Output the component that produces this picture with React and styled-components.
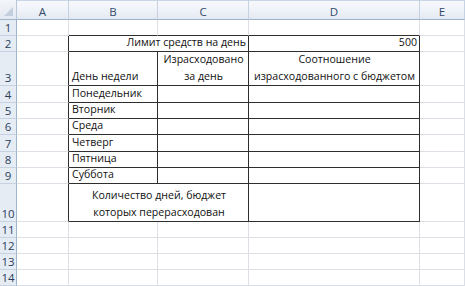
import React from "react";
import styled, { createGlobalStyle, css } from "styled-components";

const Global = createGlobalStyle`
  html, body { margin: 0; padding: 0; background: #ffffff; }
  body { font-family: "Open Sans", "Noto Sans", Arial, sans-serif; }
`;

const COLS = [17, 52, 89, 91, 171, 45];
const ROWS = [20, 16, 16, 34, 17, 16, 16, 17, 16, 16, 38, 16, 16, 16, 16];
const LETTERS = ["A", "B", "C", "D", "E"];

const GRID = "#dcdfe6";
const DARK = "#2e2e2e";

const Sheet = styled.div`
  display: grid;
  grid-template-columns: ${COLS.map((c) => c + "px").join(" ")};
  grid-template-rows: ${ROWS.map((r) => r + "px").join(" ")};
  width: 465px;
  height: 286px;
  overflow: hidden;
  background: #fff;
`;

const Corner = styled.div`
  position: relative;
  background: linear-gradient(#f3f6fa, #e2e8f1);
  border-right: 1px solid #b7c6d8;
  border-bottom: 1px solid #9fb3cb;
  box-sizing: border-box;
  &::after {
    content: "";
    position: absolute;
    right: 3px;
    bottom: 3px;
    width: 0;
    height: 0;
    border-left: 9px solid transparent;
    border-bottom: 9px solid #c3cedd;
  }
`;

const ColHead = styled.div`
  display: flex;
  align-items: center;
  justify-content: center;
  box-sizing: border-box;
  padding-top: 2px;
  background: linear-gradient(#f7f9fc 0%, #eef2f8 55%, #e3e9f2 100%);
  border-top: 1px solid #c9d5e6;
  border-right: 1px solid #c6d2e2;
  border-bottom: 1px solid #9fb3cb;
  color: #34496a;
  font-size: 11.5px;
`;

const RowHead = styled.div`
  display: flex;
  align-items: flex-end;
  justify-content: center;
  box-sizing: border-box;
  background: #e6ecf4;
  border-right: 1px solid #9fb3cb;
  border-bottom: 1px solid #c6d2e2;
  color: #2b3f5c;
  font-size: 11.5px;
  line-height: 15px;
`;

const Cell = styled.div`
  display: flex;
  flex-direction: column;
  justify-content: flex-end;
  box-sizing: border-box;
  min-width: 0;
  padding: 0 2px 0 3px;
  border-right: 1px solid ${(p) => (p.$darkRight ? DARK : GRID)};
  border-bottom: 1px solid ${(p) => (p.$darkBottom ? DARK : GRID)};
  color: #111;
  font-size: 10.6px;
  line-height: 17px;
  white-space: nowrap;
  text-align: ${(p) => p.$align || "left"};
  ${(p) =>
    p.$span &&
    css`
      grid-column: span ${p.$span};
    `}
`;

// Table content keyed by "row:col" (col index 0 = A)
const CONTENT = {
  "2:1": { text: "Лимит средств на день", align: "right", span: 2 },
  "2:3": { text: "500", align: "right" },
  "3:1": { text: "День недели" },
  "3:2": { text: ["Израсходовано", "за день"], align: "center" },
  "3:3": { text: ["Соотношение", "израсходованного с бюджетом"], align: "center" },
  "4:1": { text: "Понедельник" },
  "5:1": { text: "Вторник" },
  "6:1": { text: "Среда" },
  "7:1": { text: "Четверг" },
  "8:1": { text: "Пятница" },
  "9:1": { text: "Суббота" },
  "10:1": { text: ["Количество дней, бюджет", "которых перерасходован"], align: "center", span: 2 },
};
const SKIP = new Set(["2:2", "10:2"]);

const inTable = (r, c) => r >= 2 && r <= 10 && c >= 1 && c <= 3;

export default function App() {
  const cells = [];
  cells.push(<Corner key="corner" />);
  LETTERS.forEach((l) => cells.push(<ColHead key={"h" + l}>{l}</ColHead>));
  for (let r = 1; r <= 14; r++) {
    cells.push(<RowHead key={"r" + r}>{r}</RowHead>);
    for (let c = 0; c < 5; c++) {
      const key = r + ":" + c;
      if (SKIP.has(key)) continue;
      const info = CONTENT[key] || {};
      const span = info.span || 1;
      const lastCol = c + span - 1;
      const darkRight =
        inTable(r, lastCol) || (c === 0 && r >= 2 && r <= 10);
      const darkBottom = inTable(r, c) || (r === 1 && c >= 1 && c <= 3);
      const lines = Array.isArray(info.text) ? info.text : info.text ? [info.text] : [];
      cells.push(
        <Cell
          key={key}
          $span={span > 1 ? span : undefined}
          $align={info.align}
          $darkRight={darkRight}
          $darkBottom={darkBottom}
        >
          {lines.map((t, i) => (
            <span key={i}>{t}</span>
          ))}
        </Cell>
      );
    }
  }
  return (
    <>
      <Global />
      <Sheet>{cells}</Sheet>
    </>
  );
}
